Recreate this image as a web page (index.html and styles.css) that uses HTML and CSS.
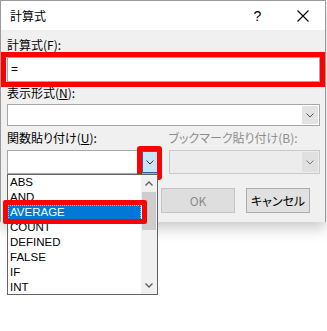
FILE: index.html
```html
<!DOCTYPE html>
<html lang="ja">
<head>
    <meta charset="UTF-8">
    <title>計算式</title>
    <link rel="stylesheet" href="styles.css">
</head>
<body>
    <div class="dialog">
        <div class="titlebar">
            <span class="title">計算式</span>
            <span class="tb-btn">?</span>
            <span class="tb-btn">
                <svg width="12" height="12" viewBox="0 0 12 12"><path d="M0.5 0.5L11.5 11.5M11.5 0.5L0.5 11.5" stroke="#000" stroke-width="1.1"/></svg>
            </span>
        </div>
        <div class="content">
            <div class="label">計算式(F):</div>
            <div class="mark-formula">
                <div class="field">=</div>
            </div>
            <div class="label label-2">表示形式(<u>N</u>):</div>
            <div class="combo combo-1">
                <span class="combo-text"></span>
                <span class="combo-btn">
                    <svg width="8" height="5" viewBox="0 0 8 5"><path d="M0.5 0.5L4 4L7.5 0.5" fill="none" stroke="#555"/></svg>
                </span>
            </div>
            <div class="pair">
                <div class="label">関数貼り付け(<u>U</u>):</div>
                <div class="label disabled">ブックマーク貼り付け(B):</div>
                <div class="combo combo-fn">
                    <span class="combo-text"></span>
                    <span class="combo-btn active">
                        <svg width="8" height="5" viewBox="0 0 8 5"><path d="M0.5 0.5L4 4L7.5 0.5" fill="none" stroke="#333"/></svg>
                    </span>
                    <span class="mark-btn"></span>
                    <div class="listbox">
                        <ul class="items">
                            <li>ABS</li>
                            <li>AND</li>
                            <li class="selected">AVERAGE</li>
                            <li>COUNT</li>
                            <li>DEFINED</li>
                            <li>FALSE</li>
                            <li>IF</li>
                            <li>INT</li>
                        </ul>
                        <div class="scrollbar">
                            <span class="sb-arrow">
                                <svg width="8" height="5" viewBox="0 0 8 5"><path d="M0.5 4.5L4 1L7.5 4.5" fill="none" stroke="#606060" stroke-width="1.4"/></svg>
                            </span>
                            <span class="sb-thumb"></span>
                            <span class="sb-track"></span>
                            <span class="sb-arrow">
                                <svg width="8" height="5" viewBox="0 0 8 5"><path d="M0.5 0.5L4 4L7.5 0.5" fill="none" stroke="#606060" stroke-width="1.4"/></svg>
                            </span>
                        </div>
                        <span class="mark-item"></span>
                    </div>
                </div>
                <div class="combo disabled">
                    <span class="combo-text"></span>
                    <span class="combo-btn">
                        <svg width="8" height="5" viewBox="0 0 8 5"><path d="M0.5 0.5L4 4L7.5 0.5" fill="none" stroke="#777"/></svg>
                    </span>
                </div>
            </div>
            <div class="buttons">
                <button class="btn btn-ok" disabled>OK</button>
                <button class="btn btn-cancel">キャンセル</button>
            </div>
        </div>
    </div>
</body>
</html>
```

FILE: styles.css
```css
*{
    padding: 0;
    margin: 0;
    box-sizing: border-box;
}
html, body {
    height: 100%;
}
body {
    background: #fff;
    font-family: "Noto Sans CJK JP", sans-serif;
    font-size: 12px;
    font-feature-settings: "palt";
    color: #000;
}
.dialog {
    width: 326px;
    border: 1px solid #9a9a9a;
    border-bottom: none;
    background: #f0f0f0;
    box-shadow: 0 6px 14px rgba(0,0,0,0.22);
}
.titlebar {
    height: 29px;
    background: #fff;
    display: flex;
    align-items: center;
}
.title {
    flex: 1;
    padding-left: 9px;
    font-size: 12px;
    line-height: 16px;
}
.tb-btn {
    width: 45px;
    height: 29px;
    display: flex;
    align-items: center;
    justify-content: center;
    font-family: "Liberation Sans", sans-serif;
    font-size: 14px;
}
.content {
    padding: 8px 5px 9px 6px;
}
.label {
    line-height: 14px;
    height: 14px;
    white-space: nowrap;
}
.label u {
    text-underline-offset: 1px;
}
.label.disabled {
    color: #8d8d8d;
}
.mark-formula {
    margin: 0 -5px 0 -6px;
    border: 5px solid #ff0000;
    padding-left: 1px;
}
.field {
    height: 25px;
    background: #fff;
    border: 1px solid #a8a8a8;
    padding-left: 3px;
    line-height: 22px;
    font-family: "Liberation Sans", sans-serif;
}
.label-2 {
    margin-top: -1px;
    margin-bottom: 4px;
}
.combo {
    position: relative;
    display: flex;
    background: #fff;
    border: 1px solid #a8a8a8;
}
.combo-1 {
    height: 22px;
}
.combo-text {
    flex: 1;
}
.combo-btn {
    width: 16px;
    margin: 1px;
    background: #e3e3e3;
    display: flex;
    align-items: center;
    justify-content: center;
}
.combo-btn.active {
    margin: 0 0 0 0;
    background: #cce4f7;
    border: 1px solid #2a63a8;
}
.pair {
    margin-top: 5px;
    display: grid;
    grid-template-columns: 1fr 1fr;
    column-gap: 10px;
    row-gap: 5px;
}
.pair .combo {
    height: 24px;
}
.combo.disabled {
    background: #ececec;
    border-color: #c9c9c9;
}
.combo.disabled .combo-btn {
    background: #e0e0e0;
}
.mark-btn {
    position: absolute;
    left: 129px;
    top: -5px;
    width: 25px;
    height: 34px;
    border: 5px solid #ff0000;
    border-radius: 3px;
}
.listbox {
    position: absolute;
    z-index: 2;
    left: -1px;
    top: 23px;
    width: 151px;
    height: 121px;
    background: #fff;
    border: 1px solid #646464;
    display: flex;
}
.items {
    flex: 1;
    list-style: none;
}
.items li {
    height: 15px;
    line-height: 15px;
    padding-left: 2px;
    font-family: "Liberation Sans", sans-serif;
    font-size: 11.5px;
}
.items .selected {
    background: #0078d7;
    color: #fff;
    outline: 1px dotted #f2b86a;
    outline-offset: -1px;
}
.scrollbar {
    width: 16px;
    background: #f0f0f0;
    display: flex;
    flex-direction: column;
}
.sb-arrow {
    height: 17px;
    display: flex;
    align-items: center;
    justify-content: center;
}
.sb-thumb {
    height: 38px;
    margin: 0 1px;
    background: #cdcdcd;
}
.sb-track {
    flex: 1;
}
.mark-item {
    position: absolute;
    left: -5px;
    top: 25px;
    width: 144px;
    height: 24px;
    border: 5px solid #ff0000;
    border-radius: 2px;
}
.buttons {
    margin-top: 14px;
    padding-right: 10px;
    display: flex;
    justify-content: flex-end;
    gap: 11px;
}
.btn {
    height: 25px;
    font-family: "Noto Sans CJK JP", sans-serif;
    font-size: 12px;
    font-feature-settings: "palt";
    color: #000;
    background: #e1e1e1;
    border: 1px solid #adadad;
}
.btn-ok {
    width: 74px;
    color: #8a8a8a;
    background: #dedede;
    border-color: #c4c4c4;
}
.btn-cancel {
    width: 64px;
}
```
